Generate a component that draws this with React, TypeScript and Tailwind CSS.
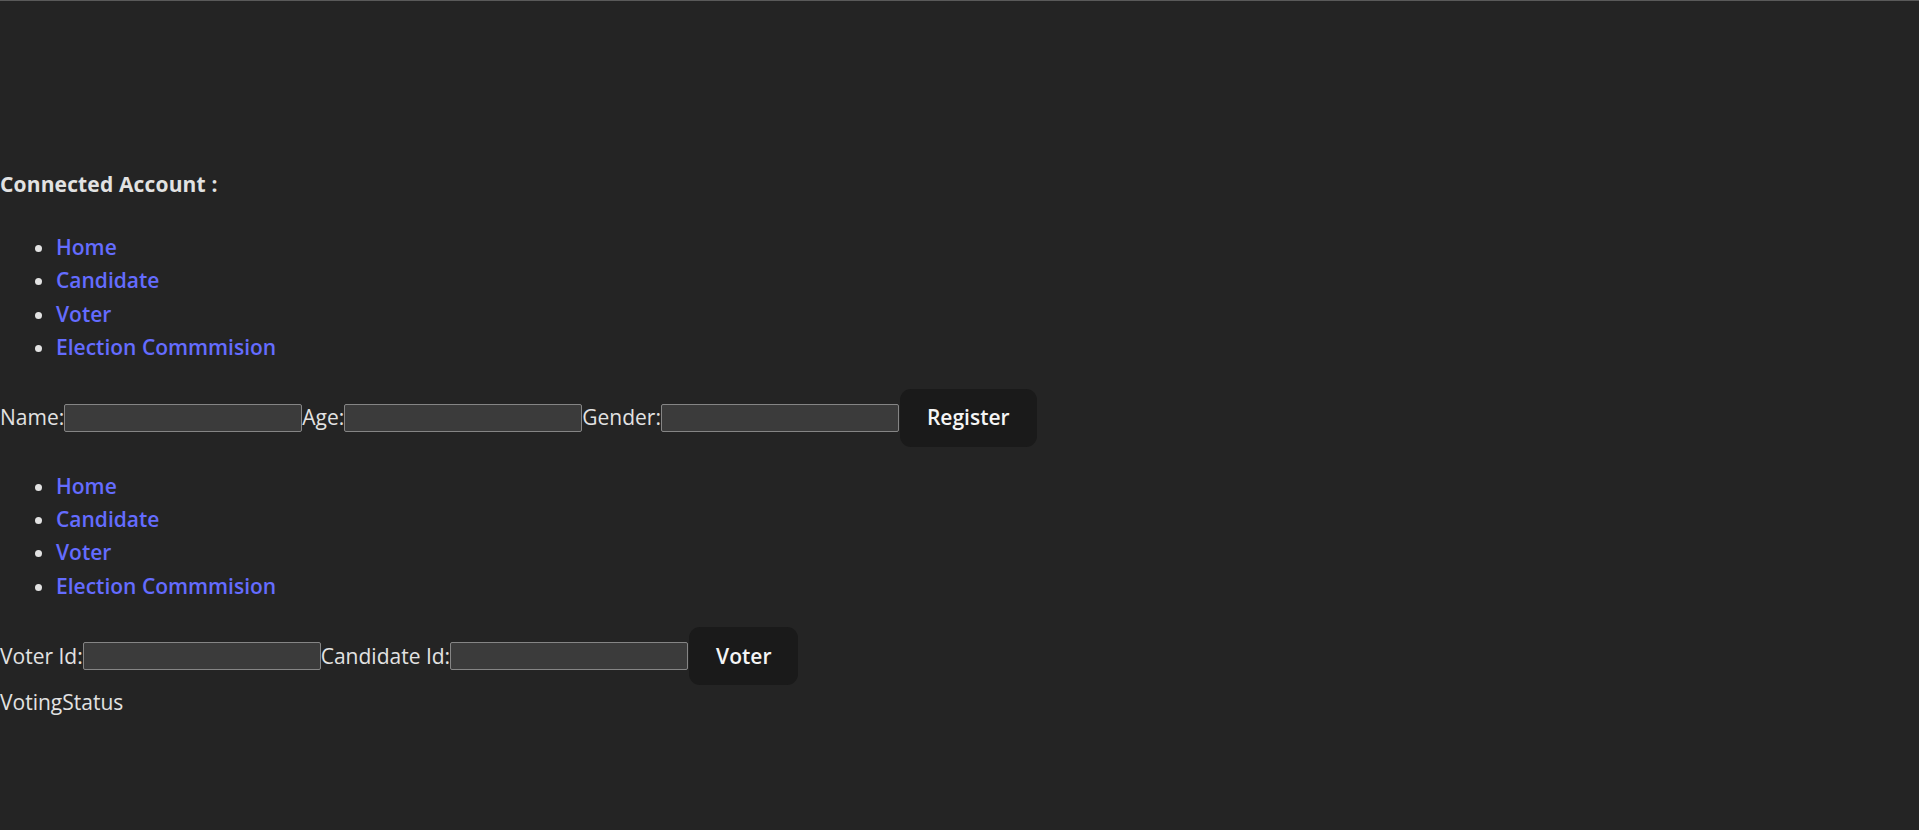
import React from "react";

const links = ["Home", "Candidate", "Voter", "Election Commmision"];

function NavList({ className = "" }: { className?: string }) {
  return (
    <ul className={`list-disc pl-[56px] leading-[33.4px] marker:text-[#e2e2e2] ${className}`}>
      {links.map((l) => (
        <li key={l}>
          <a href="#" className="font-semibold text-[#646cff]">
            {l}
          </a>
        </li>
      ))}
    </ul>
  );
}

function Field() {
  return (
    <input
      type="text"
      className="w-[238px] h-[28px] bg-[#3b3b3b] border border-[#858585] rounded-[2px] outline-none"
    />
  );
}

function SubmitButton({ label }: { label: string }) {
  return (
    <button className="ml-[1px] h-[58px] px-[27px] rounded-[11px] bg-[#1a1a1a] font-semibold text-[#f5f5f5]">
      {label}
    </button>
  );
}

export default function App() {
  return (
    <div className="min-h-screen bg-[#242424] border-t border-[#5a5a5a] text-[#e2e2e2] font-['Open_Sans',sans-serif] text-[21px] leading-[33px]">
      <div className="pt-[167px]">
        <p className="font-bold tracking-[0.15px]">Connected Account :</p>

        <NavList className="mt-[30px]" />

        {/* Register candidate */}
        <form className="mt-[24px] flex items-center" onSubmit={(e) => e.preventDefault()}>
          <span>Name:</span>
          <Field />
          <span>Age:</span>
          <Field />
          <span>Gender:</span>
          <Field />
          <SubmitButton label="Register" />
        </form>

        <NavList className="mt-[23px]" />

        {/* Cast vote */}
        <form className="mt-[24px] flex items-center" onSubmit={(e) => e.preventDefault()}>
          <span>Voter Id:</span>
          <Field />
          <span>Candidate Id:</span>
          <Field />
          <SubmitButton label="Voter" />
        </form>
        <div className="mt-[1px]">VotingStatus</div>
      </div>
    </div>
  );
}
